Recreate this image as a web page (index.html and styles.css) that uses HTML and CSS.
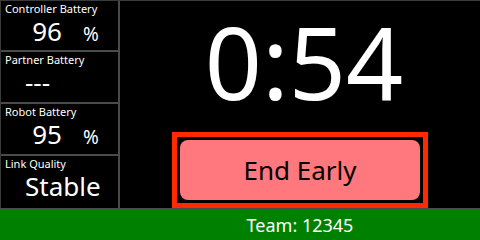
FILE: index.html
```html
<!DOCTYPE html>
<html lang="en">
<head>
  <meta charset="UTF-8">
  <title>Match Screen</title>
  <link rel="stylesheet" href="styles.css">
</head>
<body>
  <div class="screen">
    <div class="main">
      <div class="stats">
        <div class="cell">
          <div class="label">Controller Battery</div>
          <div class="value"><span class="num">96</span><span class="unit">%</span></div>
        </div>
        <div class="cell">
          <div class="label">Partner Battery</div>
          <div class="value"><span class="dash">---</span></div>
        </div>
        <div class="cell">
          <div class="label">Robot Battery</div>
          <div class="value"><span class="num">95</span><span class="unit">%</span></div>
        </div>
        <div class="cell">
          <div class="label">Link Quality</div>
          <div class="value"><span class="word">Stable</span></div>
        </div>
      </div>
      <div class="panel">
        <div class="clock">0:54</div>
        <div class="end-box">
          <button class="end-button">End Early</button>
        </div>
      </div>
    </div>
    <div class="footer">Team: 12345</div>
  </div>
</body>
</html>
```

FILE: styles.css
```css
body {
  margin: 0;
  padding: 0;
  background: black;
  font-family: "Noto Sans", "Open Sans", sans-serif;
  color: white;
}

.screen {
  width: 480px;
  height: 240px;
  display: flex;
  flex-direction: column;
}

.main {
  height: 209px;
  box-sizing: border-box;
  border-top: 1px solid #3a3a3a;
  border-bottom: 1px solid #4a4a4a;
  display: flex;
}

.stats {
  width: 120px;
  box-sizing: border-box;
  border-right: 2px solid #4a4a4a;
  border-left: 1px solid #3a3a3a;
  display: flex;
  flex-direction: column;
}

.cell {
  height: 52px;
  box-sizing: border-box;
  border-bottom: 2px solid #4a4a4a;
  padding-left: 4px;
}

.cell:first-child {
  height: 51px;
}

.cell:last-child {
  border-bottom: none;
}

.label {
  font-size: 11px;
  line-height: 15px;
}

.value {
  display: flex;
  align-items: baseline;
  font-size: 26px;
  line-height: 30px;
}

.num {
  width: 57px;
  text-align: right;
}

.unit {
  font-size: 19px;
  margin-left: 21px;
}

.dash {
  margin-left: 20px;
}

.word {
  margin-left: 20px;
}

.panel {
  flex: 1;
  display: flex;
  flex-direction: column;
  align-items: center;
}

.clock {
  font-size: 100px;
  line-height: 1.2;
  padding-left: 8px;
}

.end-box {
  margin-top: auto;
  border: 5px solid #ff2a00;
  padding: 3px;
  background: black;
}

.end-button {
  width: 240px;
  height: 60px;
  border: none;
  border-radius: 8px;
  background-color: #ff787e;
  color: black;
  font-family: inherit;
  font-size: 26px;
  padding: 0;
}

.footer {
  flex: 1;
  background: #008000;
  font-size: 18px;
  display: flex;
  align-items: center;
  justify-content: center;
  padding-left: 120px;
}
```
